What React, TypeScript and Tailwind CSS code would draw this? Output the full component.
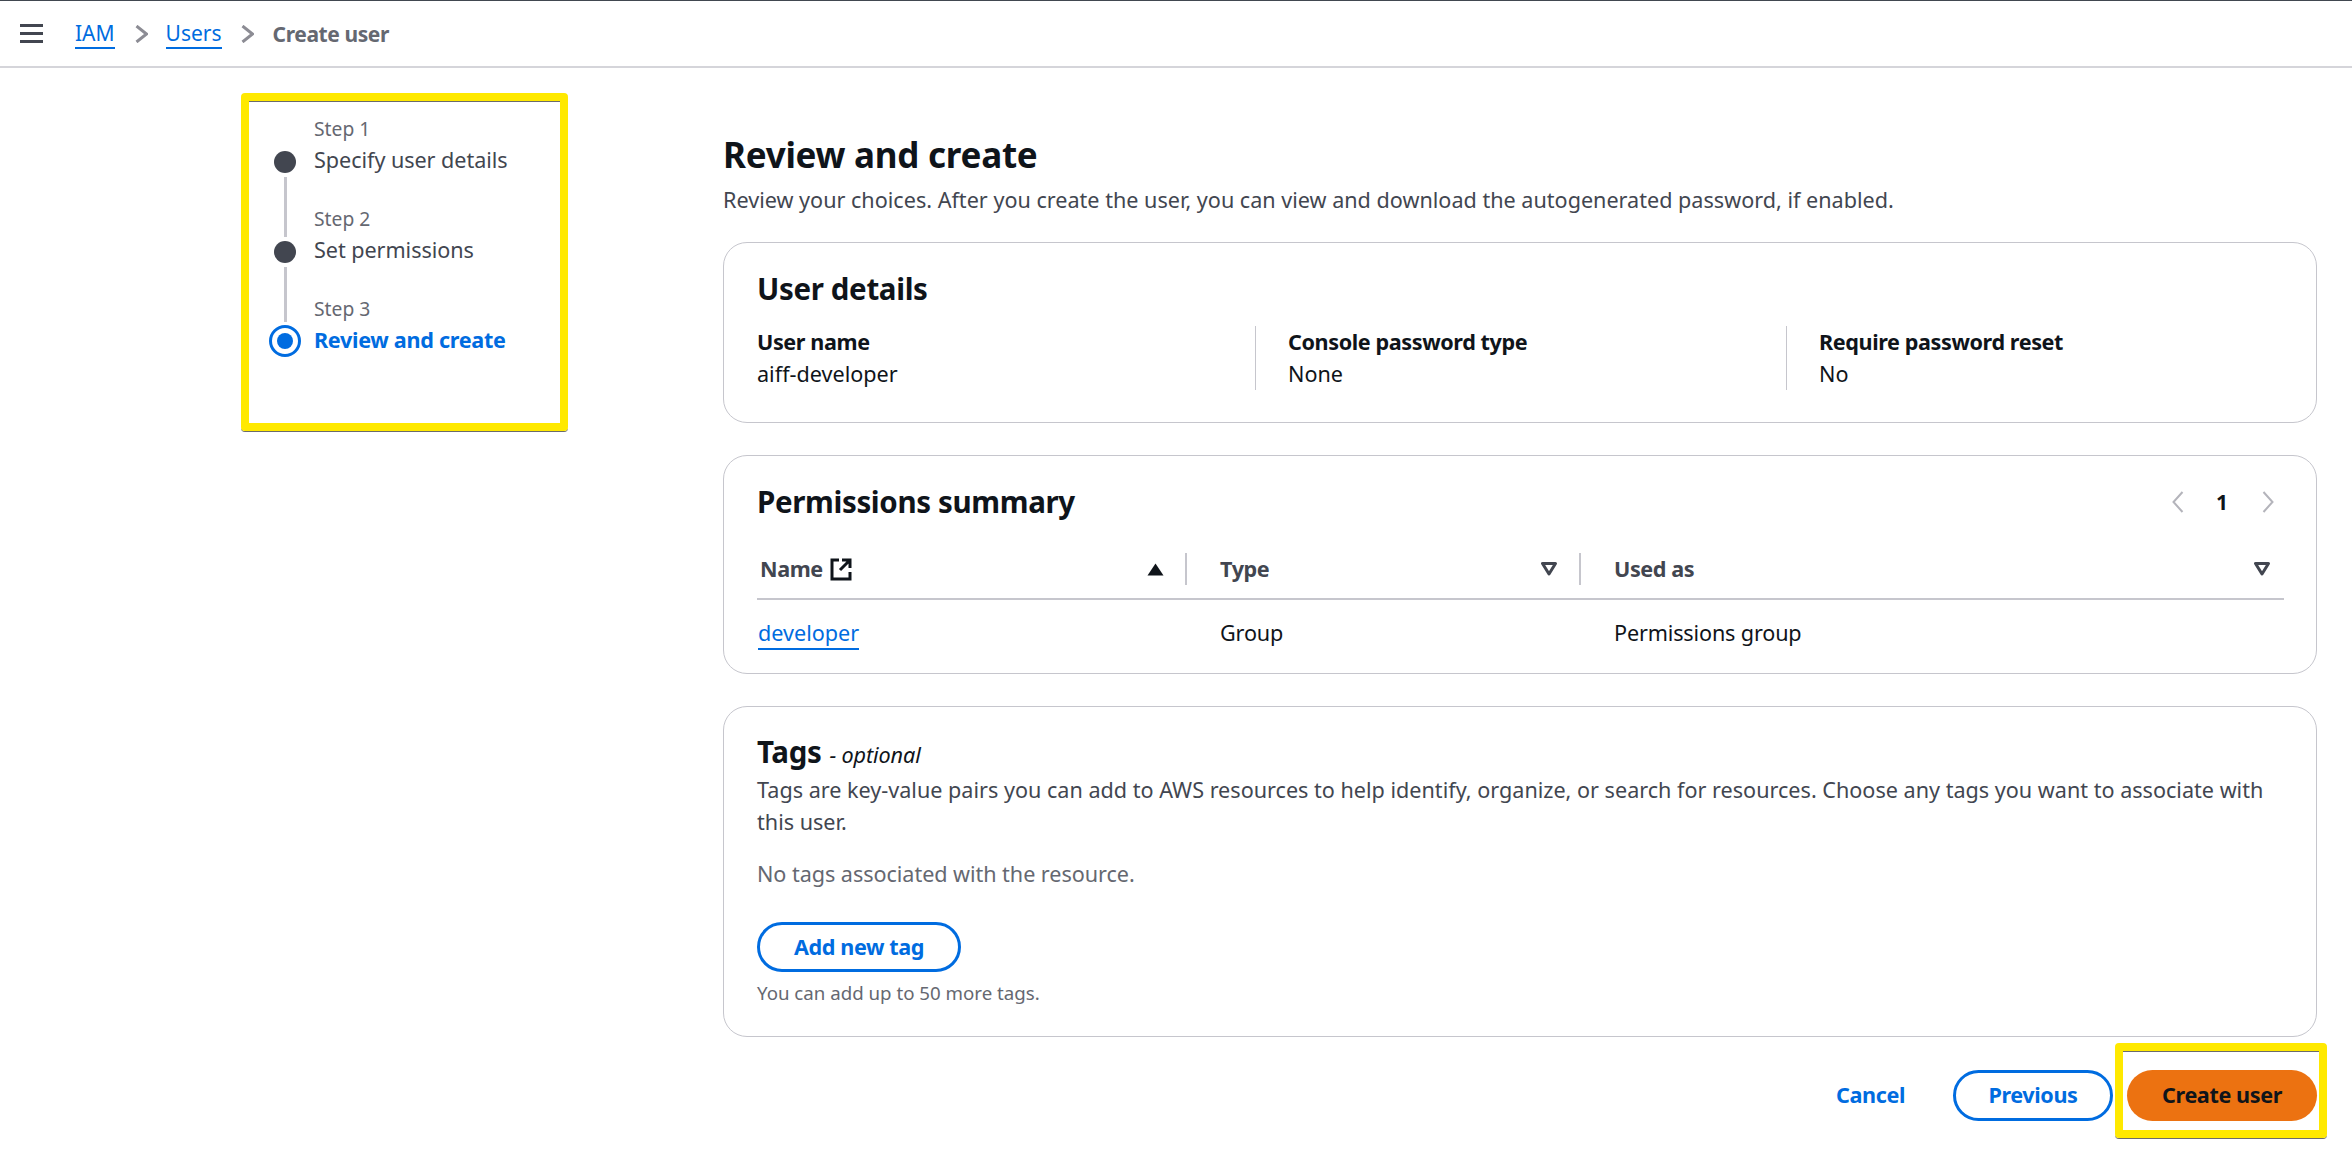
import React from "react";

const Tri = ({ up = false }: { up?: boolean }) =>
  up ? (
    <svg width="17" height="13" viewBox="0 0 17 13" className="shrink-0"><path d="M8.5 0.5 L16.5 12.5 H0.5 Z" fill="#0f141a" /></svg>
  ) : (
    <svg width="16" height="14" viewBox="0 0 16 14" className="shrink-0"><path d="M1.5 1.5 H14.5 L8 12 Z" fill="none" stroke="#424650" strokeWidth="3" strokeLinejoin="round" /></svg>
  );

const Chevron = ({ left = false, color = "#8c8c94", w = 13, h = 18, sw = 3 }: { left?: boolean; color?: string; w?: number; h?: number; sw?: number }) => (
  <svg width={w} height={h} viewBox={`0 0 ${w} ${h}`} className="shrink-0">
    <path d={left ? `M${w - 1.5} 1 L1.5 ${h / 2} L${w - 1.5} ${h - 1}` : `M1.5 1 L${w - 1.5} ${h / 2} L1.5 ${h - 1}`} fill="none" stroke={color} strokeWidth={sw} />
  </svg>
);

const Step = ({ n, label, state }: { n: number; label: string; state: "done" | "active" }) => (
  <div className="relative h-[90px] pl-[65px]">
    <div className="h-[31px] text-[19.3px] leading-[30px] text-[#656871]">Step {n}</div>
    <div className={`h-[30px] text-[21.6px] leading-[30px] ${state === "active" ? "font-bold tracking-[-0.3px] text-[#006ce0]" : "tracking-[-0.05px] text-[#424650]"}`}>{label}</div>
    {state === "done" ? (
      <div className="absolute left-[25px] top-[37px] h-[22px] w-[22px] rounded-full bg-[#424650]" />
    ) : (
      <div className="absolute left-[20px] top-[31px] flex h-[32px] w-[32px] items-center justify-center rounded-full border-[3px] border-[#006ce0]">
        <div className="h-[16px] w-[16px] rounded-full bg-[#006ce0]" />
      </div>
    )}
  </div>
);

const Detail = ({ label, value, divider }: { label: string; value: string; divider?: boolean }) => (
  <div className="w-[531px] shrink-0">
    <div className={`w-[499px] ${divider ? "border-r border-[#c6c6cd]" : ""}`}>
      <div className="h-[32px] text-[21.6px] font-bold leading-[32px] tracking-[-0.4px]">{label}</div>
      <div className="h-[32px] text-[21.6px] leading-[32px]">{value}</div>
    </div>
  </div>
);

const Card = ({ className, children }: { className: string; children: React.ReactNode }) => (
  <section className={`rounded-[24px] border border-[#c6c6cd] bg-white px-[33px] ${className}`}>{children}</section>
);

const Highlight = ({ className }: { className: string }) => (
  <div className={`pointer-events-none absolute rounded-[4px] border-[8px] border-[#ffe900] shadow-[0_1px_0_#6b6b6b,inset_0_1px_0_#6b6b6b] ${className}`} />
);

export default function App() {
  return (
    <div className="relative h-[1154px] w-[2352px] overflow-hidden bg-white font-['Noto_Sans',sans-serif] text-[#0f141a]">
      <header className="flex h-[68px] items-center border-b-2 border-t border-b-[#d5d5da] border-t-[#414750] pl-[20px]">
        <div className="flex w-[23px] flex-col gap-[5px]">
          <span className="h-[3px] bg-[#424650]" />
          <span className="h-[3px] bg-[#424650]" />
          <span className="h-[3px] bg-[#424650]" />
        </div>
        <a className="ml-[32px] border-b-2 border-[#006ce0] text-[21px] leading-[28px] text-[#006ce0]">IAM</a>
        <span className="ml-[20px]"><Chevron /></span>
        <a className="ml-[18px] border-b-2 border-[#006ce0] text-[21px] leading-[28px] text-[#006ce0]">Users</a>
        <span className="ml-[19px]"><Chevron /></span>
        <span className="ml-[19px] text-[21px] font-bold leading-[28px] tracking-[-0.4px] text-[#656871]">Create user</span>
      </header>

      <div className="flex">
        <nav className="ml-[249px] w-[474px] shrink-0 pt-[46px]">
          <div className="relative flex w-[311px] flex-col">
            <Step n={1} label="Specify user details" state="done" />
            <Step n={2} label="Set permissions" state="done" />
            <Step n={3} label="Review and create" state="active" />
            <div className="absolute left-[35px] top-[63px] h-[60px] w-[3px] bg-[#c6c6cd]" />
            <div className="absolute left-[35px] top-[153px] h-[55px] w-[3px] bg-[#c6c6cd]" />
          </div>
        </nav>

        <main className="w-[1594px] shrink-0">
          <h1 className="mt-[64px] h-[46px] text-[35px] font-bold leading-[46px] tracking-[-0.25px]">Review and create</h1>
          <p className="mt-[6px] h-[32px] text-[21.6px] leading-[32px] text-[#424650]">
            Review your choices. After you create the user, you can view and download the autogenerated password, if enabled.
          </p>

          <Card className="mt-[26px] h-[181px] pt-[28px]">
            <h2 className="h-[36px] text-[29.5px] font-bold leading-[36px] tracking-[-0.35px]">User details</h2>
            <div className="mt-[19px] flex">
              <Detail label="User name" value="aiff-developer" divider />
              <Detail label="Console password type" value="None" divider />
              <Detail label="Require password reset" value="No" />
            </div>
          </Card>

          <Card className="mt-[32px] h-[219px] pt-[28px]">
            <div className="flex h-[36px] items-center justify-between">
              <h2 className="text-[29.5px] font-bold leading-[36px] tracking-[-0.35px]">Permissions summary</h2>
              <div className="mr-[9px] flex items-center">
                <Chevron left color="#b4b4bb" w={12} h={22} sw={2} />
                <span className="ml-[32px] mr-[34px] text-[21px] font-bold leading-[36px]">1</span>
                <Chevron color="#b4b4bb" w={12} h={22} sw={2} />
              </div>
            </div>
            <div className="mr-[-1px] mt-[33px] grid h-[47px] grid-cols-[430px_394px_1fr] border-b-2 border-[#c6c6cd] pb-[14px]">
              <div className="flex items-center border-r-2 border-[#c6c6cd] pl-[3px] pr-[21px]">
                <span className="text-[21.6px] font-bold tracking-[-0.4px] text-[#424650]">Name</span>
                <svg width="22" height="23" viewBox="0 0 22 23" className="ml-[7px] shrink-0" fill="none" stroke="#0f141a" strokeWidth="3">
                  <path d="M9 2 H2 V21 H20 V14" />
                  <path d="M12 2 H20 V10 M20 2 L10 12" />
                </svg>
                <span className="ml-auto"><Tri up /></span>
              </div>
              <div className="flex items-center border-r-2 border-[#c6c6cd] pl-[33px] pr-[22px]">
                <span className="text-[21.6px] font-bold tracking-[-0.4px] text-[#424650]">Type</span>
                <span className="ml-auto"><Tri /></span>
              </div>
              <div className="flex items-center pl-[33px] pr-[14px]">
                <span className="text-[21.6px] font-bold tracking-[-0.4px] text-[#424650]">Used as</span>
                <span className="ml-auto"><Tri /></span>
              </div>
            </div>
            <div className="grid grid-cols-[430px_394px_1fr] pt-[17px] text-[21.6px] leading-[32px]">
              <div className="pl-[1px]"><a className="border-b-2 border-[#006ce0] pb-[1px] text-[#006ce0]">developer</a></div>
              <div className="pl-[33px] tracking-[-0.15px]">Group</div>
              <div className="pl-[33px] tracking-[-0.15px]">Permissions group</div>
            </div>
          </Card>

          <Card className="mt-[32px] h-[331px] pt-[27px]">
            <h2 className="h-[36px] leading-[36px]">
              <span className="text-[29.5px] font-bold tracking-[-0.35px]">Tags</span>
              <span className="ml-[8px] text-[21.6px] italic tracking-[-0.1px]">- optional</span>
            </h2>
            <p className="mt-[4px] text-[21.6px] leading-[32px] text-[#424650]">
              Tags are key-value pairs you can add to AWS resources to help identify, organize, or search for resources. Choose any tags you want to associate with this user.
            </p>
            <p className="mt-[20px] h-[32px] text-[21.6px] leading-[32px] tracking-[-0.05px] text-[#656871]">No tags associated with the resource.</p>
            <button className="mt-[32px] block h-[50px] w-[204px] rounded-full border-[3px] border-[#006ce0] text-[21.6px] font-bold tracking-[-0.4px] text-[#006ce0]">Add new tag</button>
            <p className="mt-[6px] h-[30px] text-[18.7px] leading-[30px] text-[#656871]">You can add up to 50 more tags.</p>
          </Card>

          <footer className="mt-[33px] flex items-center justify-end">
            <button className="mr-[48px] text-[21.6px] font-bold tracking-[-0.4px] text-[#006ce0]">Cancel</button>
            <button className="mr-[14px] h-[51px] w-[160px] rounded-full border-[3px] border-[#006ce0] text-[21.6px] font-bold tracking-[-0.4px] text-[#006ce0]">Previous</button>
            <button className="h-[51px] w-[190px] rounded-full bg-[#ec7211] text-[21.6px] font-bold tracking-[-0.4px] text-[#0f141a]">Create user</button>
          </footer>
        </main>
      </div>

      <Highlight className="left-[241px] top-[93px] h-[338px] w-[327px]" />
      <Highlight className="left-[2115px] top-[1043px] h-[95px] w-[212px]" />
    </div>
  );
}
